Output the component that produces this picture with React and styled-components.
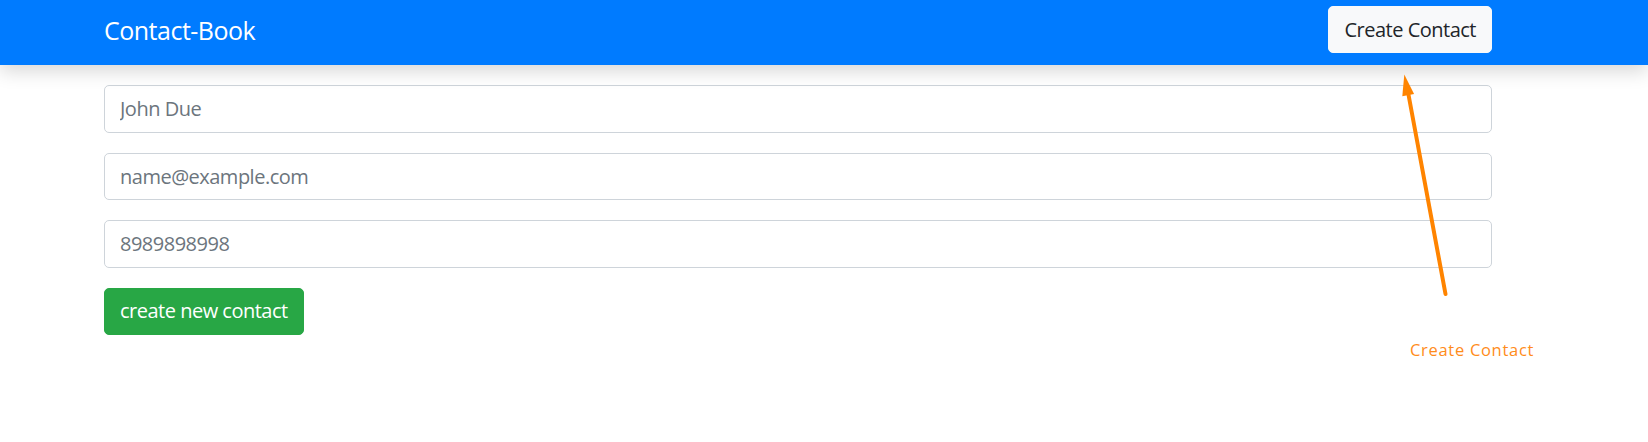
import React, { useState } from 'react';
import styled, { createGlobalStyle } from 'styled-components';

const GlobalStyle = createGlobalStyle`
  body {
    margin: 0;
    background-color: #ffffff;
    font-family: "Open Sans", "Noto Sans", sans-serif;
  }
  * {
    box-sizing: border-box;
  }
`;

const Page = styled.div`
  position: relative;
  width: 1648px;
  height: 442px;
  overflow: hidden;
`;

const Navbar = styled.nav`
  position: relative;
  z-index: 2;
  display: flex;
  justify-content: space-between;
  align-items: center;
  height: 65px;
  padding: 6px 156px 12px 104px;
  background-color: #007bff;
  box-shadow: 0 6px 18px rgba(0, 0, 0, 0.16);
`;

const Brand = styled.a`
  margin-top: 2px;
  font-size: 25px;
  line-height: 1.5;
  letter-spacing: -0.5px;
  color: #ffffff;
  text-decoration: none;
`;

const Button = styled.button`
  height: 47.5px;
  padding: 0 15px;
  font-family: inherit;
  font-size: 20px;
  line-height: 1.5;
  letter-spacing: -0.5px;
  color: ${(p) => (p.$variant === 'light' ? '#212529' : '#ffffff')};
  background-color: ${(p) => (p.$variant === 'light' ? '#f8f9fa' : '#28a745')};
  border: 1px solid ${(p) => (p.$variant === 'light' ? '#f8f9fa' : '#28a745')};
  border-radius: 5px;
  cursor: pointer;
`;

const Form = styled.form`
  display: flex;
  flex-direction: column;
  align-items: flex-start;
  gap: 20px;
  padding: 20px 156px 0 104px;
`;

const Input = styled.input`
  width: 100%;
  height: 47.5px;
  padding: 0 15px;
  font-family: inherit;
  font-size: 20px;
  letter-spacing: -0.5px;
  color: #495057;
  background-color: #ffffff;
  border: 1px solid #ced4da;
  border-radius: 5px;
  outline: none;
  &::placeholder {
    color: #6c757d;
  }
`;

const Annotation = styled.svg`
  position: absolute;
  top: 0;
  left: 0;
  z-index: 3;
  pointer-events: none;
`;

const Label = styled.text`
  font-family: "Open Sans", "Noto Sans", sans-serif;
  font-size: 16.5px;
  letter-spacing: 0.7px;
  fill: #ff8c1a;
`;

const App = () => {
  const [name, setName] = useState('');
  const [email, setEmail] = useState('');
  const [phone, setPhone] = useState('');

  return (
    <Page>
      <GlobalStyle />
      <Navbar>
        <Brand href="#">Contact-Book</Brand>
        <Button type="button" $variant="light">Create Contact</Button>
      </Navbar>

      <Form onSubmit={(e) => e.preventDefault()}>
        <Input
          type="text"
          value={name}
          placeholder="John Due"
          onChange={(e) => setName(e.target.value)}
        />
        <Input
          type="email"
          value={email}
          placeholder="name@example.com"
          onChange={(e) => setEmail(e.target.value)}
        />
        <Input
          type="text"
          value={phone}
          placeholder="8989898998"
          onChange={(e) => setPhone(e.target.value)}
        />
        <Button type="submit">create new contact</Button>
      </Form>

      {/* callout pointing at the navbar button */}
      <Annotation width="1648" height="442" viewBox="0 0 1648 442">
        <line x1="1408" y1="92" x2="1445.5" y2="294" stroke="#ff8400" strokeWidth="4" strokeLinecap="round" />
        <polygon points="1404.3,74.5 1414.1,94 1402.3,96.2" fill="#ff8400" />
        <Label x="1410" y="355.5">Create Contact</Label>
      </Annotation>
    </Page>
  );
};

export default App;
